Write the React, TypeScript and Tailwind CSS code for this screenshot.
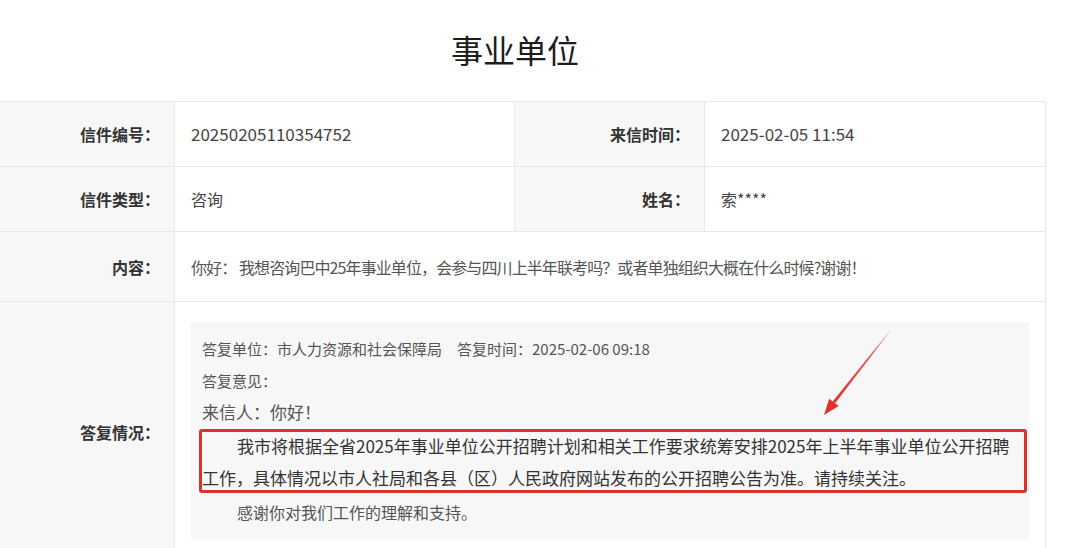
const font = "font-['Microsoft_YaHei','Noto_Sans_CJK_SC',sans-serif]";

const border = "border-[#e8e8e8]";
const labelCell = `flex items-center justify-end pr-[14px] bg-[#f7f7f7] text-[16px] font-bold text-[#333] border-r border-b ${border}`;
const valueCell = `flex items-center pl-4 bg-white text-[16px] text-[#444] border-r border-b ${border}`;

function RedArrow() {
  return (
    <svg
      className="pointer-events-none absolute left-0 top-0"
      width="1080"
      height="548"
      viewBox="0 0 1080 548"
    >
      <defs>
        <linearGradient id="shaft" x1="890" y1="331" x2="834" y2="402" gradientUnits="userSpaceOnUse">
          <stop offset="0" stopColor="#e0322b" stopOpacity="0.15" />
          <stop offset="0.35" stopColor="#e0322b" stopOpacity="0.8" />
          <stop offset="1" stopColor="#e0322b" />
        </linearGradient>
      </defs>
      <polygon points="890.4,331.3 889.6,330.7 832.7,401.5 835.1,403.3" fill="url(#shaft)" />
      <polygon points="824,415 838.6,406.1 829.2,398.7" fill="#e0322b" />
    </svg>
  );
}

export default function App() {
  return (
    <div className={`relative h-[548px] w-[1080px] overflow-hidden bg-white ${font}`}>
      <div className="ml-[-16px] w-[1062px]">
        <h1 className="flex h-[101px] items-center justify-center pb-[3px] text-[32px] font-normal text-[#1c1c1c]">
          事业单位
        </h1>

        <div className={`grid grid-cols-[191px_340px_190px_341px] border-t ${border}`}>
          <div className={`${labelCell} h-[65px]`}>信件编号：</div>
          <div className={`${valueCell} text-[17px]`}>20250205110354752</div>
          <div className={labelCell}>来信时间：</div>
          <div className={`${valueCell} text-[17px]`}>2025-02-05 11:54</div>

          <div className={`${labelCell} h-[65px]`}>信件类型：</div>
          <div className={valueCell}>咨询</div>
          <div className={labelCell}>姓名：</div>
          <div className={valueCell}>索****</div>

          <div className={`${labelCell} h-[70px]`}>内容：</div>
          <div className={`${valueCell} col-span-3 text-[13.5px] tracking-[-0.9px] text-[#555]`}>
            你好： 我想咨询巴中25年事业单位，会参与四川上半年联考吗？或者单独组织大概在什么时候?谢谢！
          </div>

          <div className={`${labelCell} h-[260px]`}>答复情况：</div>
          <div className={`col-span-3 border-r border-b bg-white pl-4 pr-4 pt-5 ${border}`}>
            <div className="bg-[#f7f7f7] px-[11px] pb-[9px] pt-[10px] text-[#555]">
              <p className="text-[15px] leading-[34px]">
                答复单位：市人力资源和社会保障局　答复时间：2025-02-06 09:18
              </p>
              <p className="text-[15px] leading-[30px]">答复意见：</p>
              <p className="text-[17px] leading-[32px]">来信人：你好！</p>
              <div className="relative mt-[2px] text-[17px] leading-[32px] text-[#333]">
                <p className="indent-[35px]">
                  我市将根据全省2025年事业单位公开招聘计划和相关工作要求统筹安排2025年上半年事业单位公开招聘
                </p>
                <p>工作，具体情况以市人社局和各县（区）人民政府网站发布的公开招聘公告为准。请持续关注。</p>
                <div className="pointer-events-none absolute bottom-[1px] left-[-3px] right-[-9px] top-[-1px] rounded-[3px] border-[3px] border-[#d8332c]" />
              </div>
              <p className="indent-[35px] text-[16px] leading-[36px]">感谢你对我们工作的理解和支持。</p>
            </div>
          </div>
        </div>
      </div>
      <RedArrow />
    </div>
  );
}
